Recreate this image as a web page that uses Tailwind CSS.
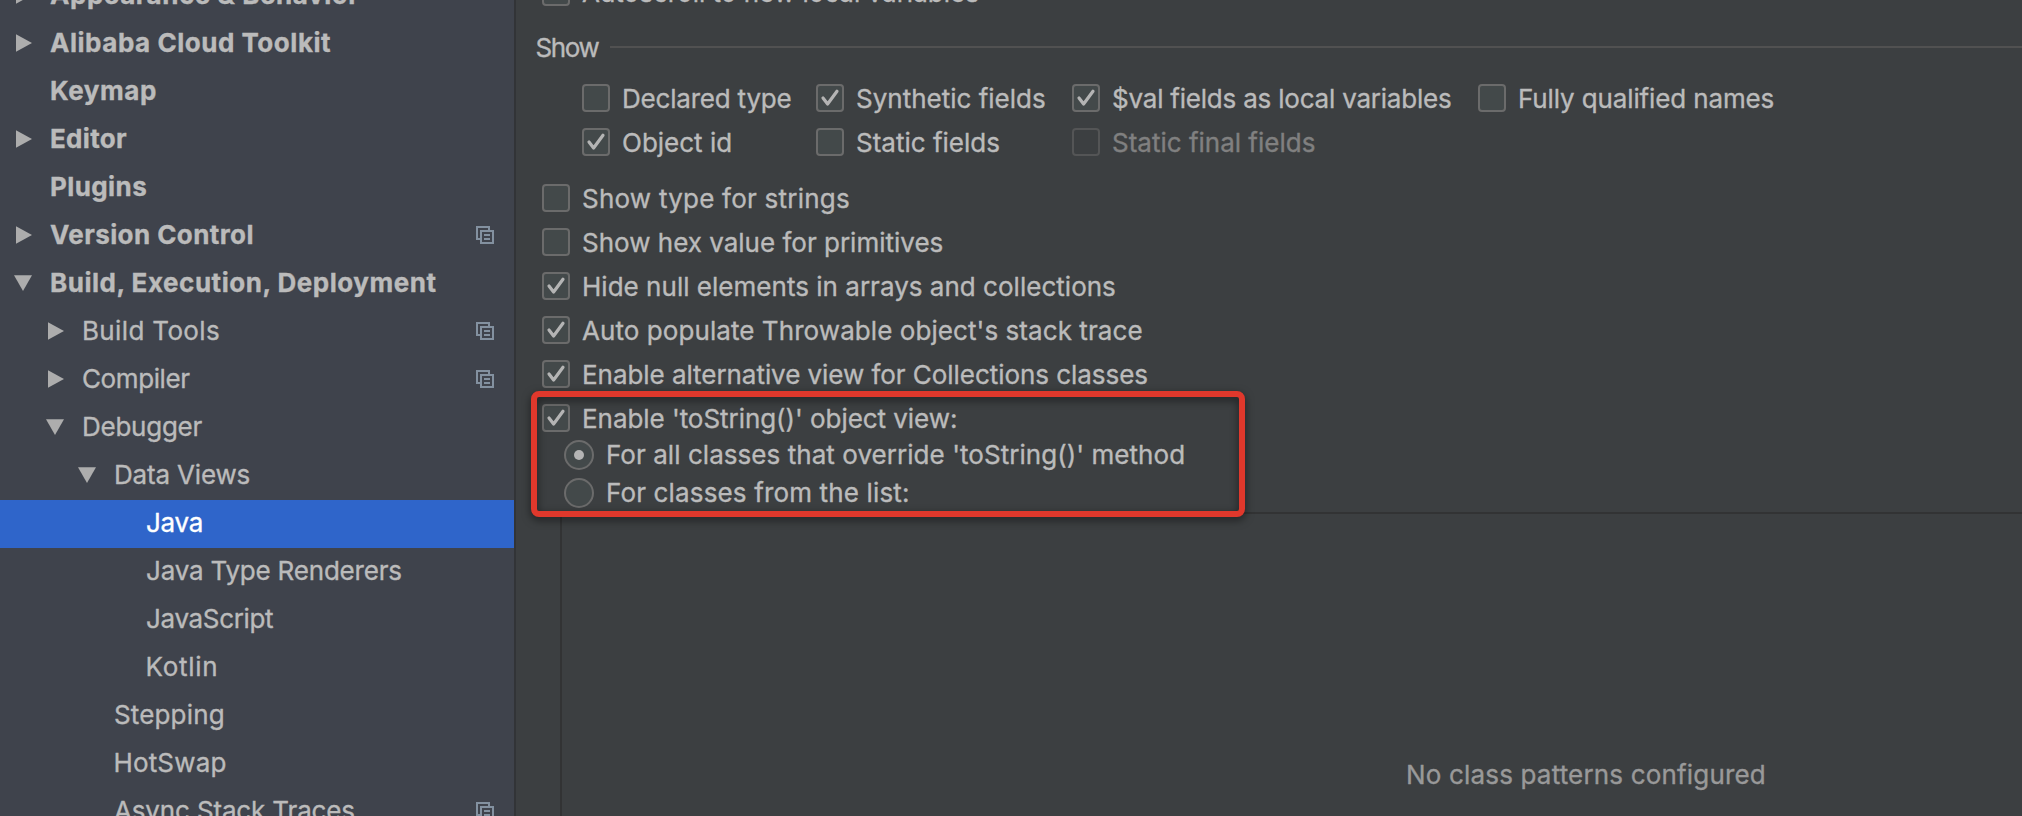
<!DOCTYPE html>
<html lang="en">
<head>
<meta charset="utf-8">
<title>Debugger Data Views</title>
<script src="https://cdn.jsdelivr.net/npm/@tailwindcss/browser@4"></script>
</head>
<body class="w-[2022px] h-[816px] overflow-hidden bg-[#3c3f41] text-[#bbbbbb] text-[26px] font-['Inter',sans-serif] whitespace-nowrap [-webkit-text-stroke:0.35px_currentColor]">
<svg class="hidden">
  <symbol id="right" viewBox="0 0 18 18"><path d="M2 0.3 18 9 2 17.7Z" fill="#adadad"/></symbol>
  <symbol id="down" viewBox="0 0 18 18"><path d="M0 1.2H18L9 17Z" fill="#adadad"/></symbol>
  <symbol id="copy" viewBox="0 0 18 18"><path d="M4 13H1V1H13V4M5 5H17V17H5ZM8 9H14M8 13H14" fill="none" stroke="#8391a0" stroke-width="2"/></symbol>
  <symbol id="check" viewBox="0 0 28 28"><path d="M7 14 11.6 20 21 7.3" fill="none" stroke="#b4b4b4" stroke-width="3.2" stroke-linecap="round" stroke-linejoin="round"/></symbol>
</svg>
<div class="flex h-full">
  <aside class="w-[516px] h-full shrink-0 overflow-hidden bg-[#3f434c] border-r-2 border-[#323437]">
    <div class="-mt-7 flex flex-col *:flex *:h-12 *:shrink-0 *:items-center *:pb-[3px] *:pr-5">
      <div class="pl-3.5 font-bold tracking-[0.55px]"><svg class="w-[18px] h-[18px] mr-[18px] mt-px"><use href="#right"/></svg>Appearance &amp; Behavior</div>
      <div class="pl-3.5 font-bold tracking-[0.53px]"><svg class="w-[18px] h-[18px] mr-[18px] mt-px"><use href="#right"/></svg>Alibaba Cloud Toolkit</div>
      <div class="pl-[50px] font-bold tracking-[0.55px]">Keymap</div>
      <div class="pl-3.5 font-bold tracking-[0.3px]"><svg class="w-[18px] h-[18px] mr-[18px] mt-px"><use href="#right"/></svg>Editor</div>
      <div class="pl-[50px] font-bold tracking-[0.4px]">Plugins</div>
      <div class="pl-3.5 font-bold tracking-[0.42px]"><svg class="w-[18px] h-[18px] mr-[18px] mt-px"><use href="#right"/></svg>Version Control<svg class="w-[18px] h-[18px] ml-auto mt-px"><use href="#copy"/></svg></div>
      <div class="pl-3.5 font-bold tracking-[0.53px]"><svg class="w-[18px] h-[18px] mr-[18px] mt-px"><use href="#down"/></svg>Build, Execution, Deployment</div>
      <div class="pl-[46px] tracking-[0.35px]"><svg class="w-[18px] h-[18px] mr-[18px] mt-px"><use href="#right"/></svg>Build Tools<svg class="w-[18px] h-[18px] ml-auto mt-px"><use href="#copy"/></svg></div>
      <div class="pl-[46px] tracking-[-0.4px]"><svg class="w-[18px] h-[18px] mr-[18px] mt-px"><use href="#right"/></svg>Compiler<svg class="w-[18px] h-[18px] ml-auto mt-px"><use href="#copy"/></svg></div>
      <div class="pl-[46px] tracking-[-0.25px]"><svg class="w-[18px] h-[18px] mr-[18px] mt-px"><use href="#down"/></svg>Debugger</div>
      <div class="pl-[78px] tracking-[-0.18px]"><svg class="w-[18px] h-[18px] mr-[18px] mt-px"><use href="#down"/></svg>Data Views</div>
      <div class="pl-[146px] tracking-[-0.3px] bg-[#2f65ca] text-white">Java</div>
      <div class="pl-[146px] tracking-[-0.2px]">Java Type Renderers</div>
      <div class="pl-[146px] tracking-[-0.34px]">JavaScript</div>
      <div class="pl-[145.5px] tracking-[0.7px]">Kotlin</div>
      <div class="pl-[114px] tracking-[0.15px]">Stepping</div>
      <div class="pl-[113.5px] tracking-[0.15px]">HotSwap</div>
      <div class="pl-[114px] tracking-[-0.15px]">Async Stack Traces<svg class="w-[18px] h-[18px] ml-auto mt-px"><use href="#copy"/></svg></div>
    </div>
  </aside>

  <main class="relative flex-1 h-full overflow-hidden">
    <div class="flex flex-col leading-[30px]">
      <div class="-mt-[22px] ml-[26px] h-7 flex gap-3"><span class="size-7 shrink-0 rounded-sm border-2 border-[#6b6b6b] bg-[#43494a]"></span>Autoscroll to new local variables</div>

      <div class="mt-[26px] ml-[19.5px] h-7 flex items-center"><span class="w-[74.5px] pt-[3px] tracking-[-1.4px]">Show</span><span class="h-0.5 flex-1 mt-0.5 bg-[#515151]"></span></div>

      <div class="mt-6 ml-[66px] grid grid-cols-[234px_256px_406px_auto] gap-y-4 *:flex *:gap-3 *:h-7">
        <div class="tracking-[-0.2px]"><span class="size-7 shrink-0 rounded-sm border-2 border-[#6b6b6b] bg-[#43494a]"></span>Declared type</div>
        <div><svg class="size-7 shrink-0 rounded-sm bg-[#43494a] ring-2 ring-inset ring-[#6b6b6b]"><use href="#check"/></svg>Synthetic fields</div>
        <div class="tracking-[-0.21px]"><svg class="size-7 shrink-0 rounded-sm bg-[#43494a] ring-2 ring-inset ring-[#6b6b6b]"><use href="#check"/></svg>$val fields as local variables</div>
        <div class="tracking-[-0.13px]"><span class="size-7 shrink-0 rounded-sm border-2 border-[#6b6b6b] bg-[#43494a]"></span>Fully qualified names</div>
        <div><svg class="size-7 shrink-0 rounded-sm bg-[#43494a] ring-2 ring-inset ring-[#6b6b6b]"><use href="#check"/></svg>Object id</div>
        <div><span class="size-7 shrink-0 rounded-sm border-2 border-[#6b6b6b] bg-[#43494a]"></span>Static fields</div>
        <div class="text-[#808080]"><span class="size-7 shrink-0 rounded-sm border-2 border-[#545556]"></span>Static final fields</div>
      </div>

      <div class="mt-7 ml-[26px] flex flex-col gap-4 *:flex *:gap-3 *:h-7">
        <div class="tracking-[0.23px]"><span class="size-7 shrink-0 rounded-sm border-2 border-[#6b6b6b] bg-[#43494a]"></span>Show type for strings</div>
        <div><span class="size-7 shrink-0 rounded-sm border-2 border-[#6b6b6b] bg-[#43494a]"></span>Show hex value for primitives</div>
        <div class="tracking-[0.02px]"><svg class="size-7 shrink-0 rounded-sm bg-[#43494a] ring-2 ring-inset ring-[#6b6b6b]"><use href="#check"/></svg>Hide null elements in arrays and collections</div>
        <div class="tracking-[0.07px]"><svg class="size-7 shrink-0 rounded-sm bg-[#43494a] ring-2 ring-inset ring-[#6b6b6b]"><use href="#check"/></svg>Auto populate Throwable object's stack trace</div>
        <div class="tracking-[-0.05px]"><svg class="size-7 shrink-0 rounded-sm bg-[#43494a] ring-2 ring-inset ring-[#6b6b6b]"><use href="#check"/></svg>Enable alternative view for Collections classes</div>
        <div class="tracking-[-0.05px]"><svg class="size-7 shrink-0 rounded-sm bg-[#43494a] ring-2 ring-inset ring-[#6b6b6b]"><use href="#check"/></svg>Enable 'toString()' object view:</div>
      </div>

      <div class="mt-2 ml-12 flex flex-col gap-2 *:flex *:gap-3 *:h-[30px]">
        <div class="tracking-[0.05px]"><span class="size-[30px] shrink-0 flex items-center justify-center rounded-full border-2 border-[#6b6b6b] bg-[#43494a]"><span class="size-2.5 rounded-full bg-[#b4b4b4]"></span></span>For all classes that override 'toString()' method</div>
        <div class="tracking-[0.15px]"><span class="size-[30px] shrink-0 rounded-full border-2 border-[#6b6b6b] bg-[#43494a]"></span>For classes from the list:</div>
      </div>

      <div class="mt-1 ml-11 h-[310px] border-l-2 border-t-2 border-[#323334] pl-[844px] pt-[246px] text-[#999999] tracking-[0.17px]">No class patterns configured</div>
    </div>
    <div class="absolute left-[15px] top-[391px] w-[714px] h-[126px] rounded-[8px] border-6 border-[#e0382c] drop-shadow-[0_3px_4px_rgba(0,0,0,0.55)]"></div>
  </main>
</div>
</body>
</html>
